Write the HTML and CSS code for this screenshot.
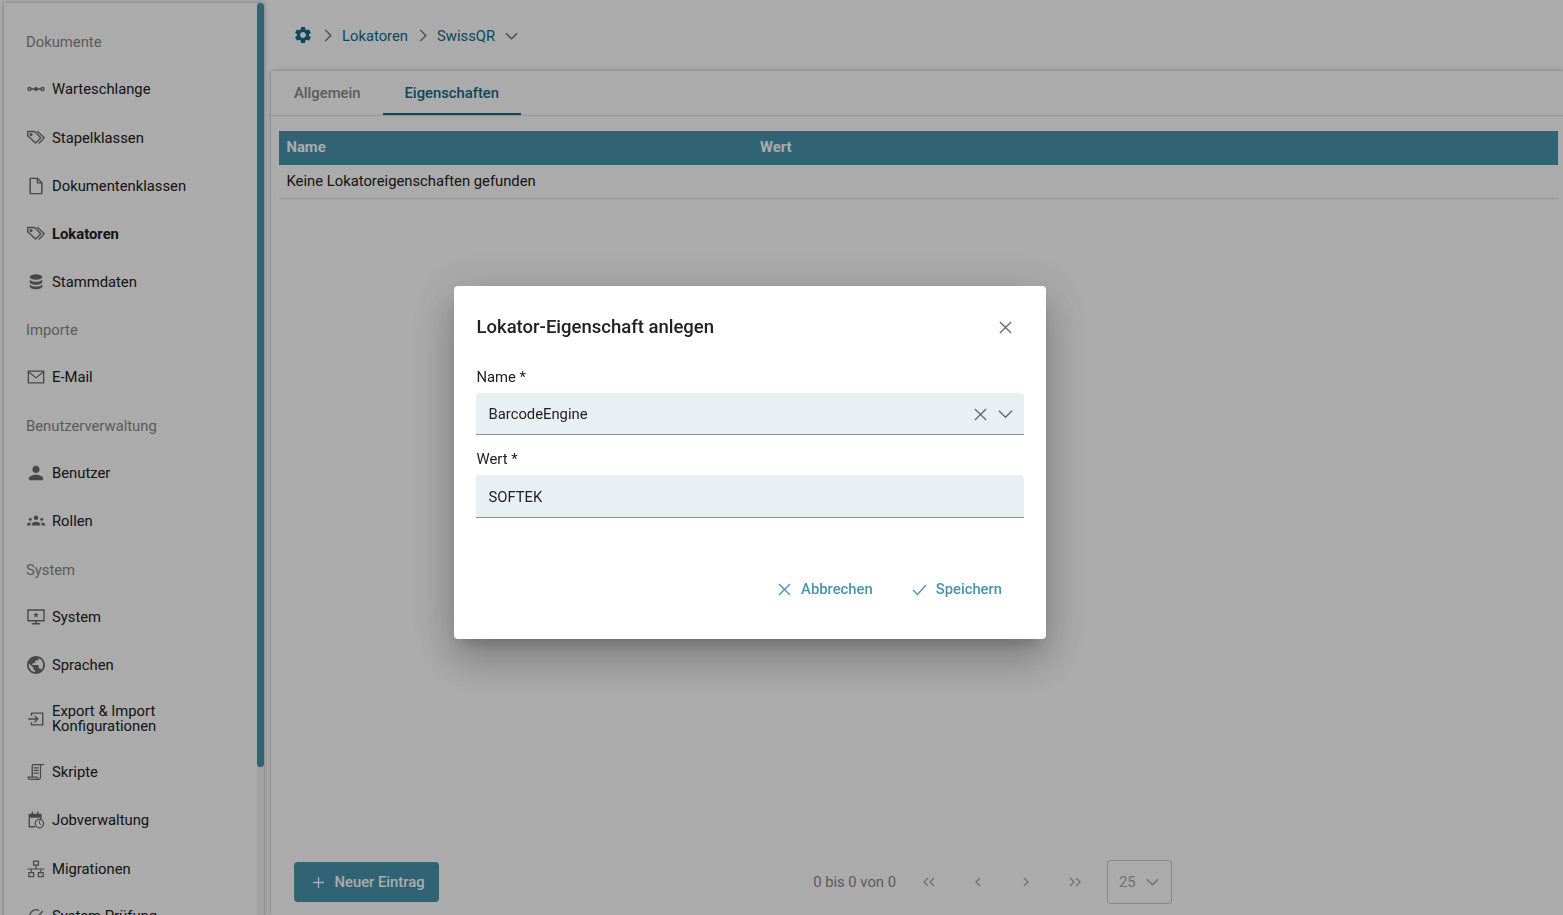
FILE: index.html
```html
<!DOCTYPE html>
<html lang="de">
<head>
<meta charset="utf-8">
<title>Lokatoren</title>
<link rel="stylesheet" href="styles.css">
</head>
<body>
<div class="app">
  <aside class="sidebar">
    <nav class="nav">
      <div class="group">Dokumente</div>
      <a class="item"><svg class="ico" viewBox="0 0 20 20"><circle cx="2.800" cy="10" r="1.700"/><circle cx="10" cy="10" r="2.200" class="fill"/><circle cx="17.200" cy="10" r="1.700"/><path d="M4.500 10h3.500M12 10h3.500"/></svg><span>Warteschlange</span></a>
      <a class="item item-low"><svg class="ico" viewBox="0 0 20 20"><path d="M.8 2.800h7.500l7 7-5.700 5.700-8.800-8z"/><circle cx="4.500" cy="6.200" r="1.100"/><path d="M11.800 2.800l7.400 7-5.700 5.700"/></svg><span>Stapelklassen</span></a>
      <a class="item item-low"><svg class="ico" viewBox="0 0 20 20"><path d="M3.500 1.500h8l5 5v12h-13z" stroke-width="1.600"/><path d="M11.500 1.500v5h5" stroke-width="1.400"/></svg><span>Dokumentenklassen</span></a>
      <a class="item item-low active"><svg class="ico" viewBox="0 0 20 20"><path d="M.8 2.800h7.500l7 7-5.700 5.700-8.800-8z"/><circle cx="4.500" cy="6.200" r="1.100"/><path d="M11.800 2.800l7.400 7-5.700 5.700"/></svg><span>Lokatoren</span></a>
      <a class="item item-low"><svg class="ico" viewBox="0 0 20 20"><ellipse cx="10" cy="4.500" rx="7" ry="3" class="fill"/><path class="fill" d="M3 7.100c1 1.700 3.800 2.600 7 2.600s6-.9 7-2.600v2.900c0 1.700-3.100 3-7 3s-7-1.300-7-3z"/><path class="fill" d="M3 12.500c1 1.700 3.800 2.600 7 2.600s6-.9 7-2.600v2.500c0 1.800-3.100 3.100-7 3.100s-7-1.300-7-3.100z"/></svg><span>Stammdaten</span></a>
      <div class="group">Importe</div>
      <a class="item"><svg class="ico" viewBox="0 0 20 20"><rect x="1.500" y="3.500" width="17" height="13" stroke-width="1.500"/><path d="M2 4.500l8 6.500 8-6.500" stroke-width="1.300"/></svg><span>E-Mail</span></a>
      <div class="group">Benutzerverwaltung</div>
      <a class="item"><svg class="ico" viewBox="2 2 20 20"><path class="fill" d="M12 12c2.210 0 4-1.790 4-4s-1.790-4-4-4-4 1.790-4 4 1.790 4 4 4zm0 2c-2.670 0-8 1.340-8 4v2h16v-2c0-2.660-5.330-4-8-4z"/></svg><span>Benutzer</span></a>
      <a class="item"><svg class="ico" viewBox="0 0 20 20"><circle cx="10" cy="6.500" r="2.500" class="fill"/><circle cx="3.600" cy="8" r="1.700" class="fill"/><circle cx="16.400" cy="8" r="1.700" class="fill"/><path class="fill" d="M5.400 15v-1.300c0-1.800 2.100-2.900 4.600-2.900s4.600 1.100 4.600 2.900V15z"/><path class="fill" d="M0 15v-1.100c0-1.200 1.400-2.200 3.600-2.200.4 0 .7 0 .9.100-.5.600-.7 1.200-.7 1.900V15zM20 15v-1.100c0-1.200-1.400-2.200-3.600-2.200-.4 0-.7 0-.9.100.5.600.7 1.200.7 1.900V15z"/></svg><span>Rollen</span></a>
      <div class="group">System</div>
      <a class="item"><svg class="ico" viewBox="0 0 20 20"><rect x="1" y="2.200" width="18" height="12" stroke-width="1.500"/><path class="fill" d="M10 4.800l.9 2 2.100.2-1.600 1.400.5 2.100-1.900-1.100-1.900 1.100.5-2.100L7 7l2.100-.2z"/><path d="M10 14.500v2.800M6 17.600h8" stroke-width="1.700"/></svg><span>System</span></a>
      <a class="item"><svg class="ico" viewBox="2 2 20 20"><path class="fill" d="M12 2C6.480 2 2 6.480 2 12s4.480 10 10 10 10-4.480 10-10S17.520 2 12 2zm-1 17.930c-3.950-.49-7-3.850-7-7.930 0-.62.08-1.210.21-1.790L9 15v1c0 1.100.9 2 2 2v1.930zm6.900-2.540c-.26-.81-1-1.390-1.900-1.390h-1v-3c0-.55-.45-1-1-1H8v-2h2c.55 0 1-.45 1-1V7h2c1.100 0 2-.9 2-2v-.41c2.930 1.190 5 4.060 5 7.410 0 2.080-.8 3.970-2.100 5.390z"/></svg><span>Sprachen</span></a>
      <a class="item item-tall"><svg class="ico" viewBox="0 0 20 20"><path d="M5 6V3.500h12.500v13H5v-2.500" stroke-width="1.500"/><path d="M2 10h10M8.800 6.800l3.300 3.200-3.300 3.200" stroke-width="1.500"/></svg><span>Export &amp; Import<br>Konfigurationen</span></a>
      <a class="item"><svg class="ico" viewBox="0 0 20 20"><path d="M5.800 15V3.300a1.500 1.500 0 0 1 1.500-1.500h11" stroke-width="1.500"/><path d="M15 1.800v14a2.400 2.400 0 0 1-2.400 2.400H3.600c-1.500 0-2.400-1-2.400-2.400h10c0 1.500.7 2.400 1.600 2.400" stroke-width="1.400"/><path d="M8 5.300h4.500M8 8.300h4.500M8 11.300h4.500" stroke-width="1.400"/></svg><span>Skripte</span></a>
      <a class="item"><svg class="ico" viewBox="0 0 20 20"><path d="M8.500 17.500H2.500V3.800h13v4.700" stroke-width="1.500"/><path class="fill" d="M2.500 3.800h13v3.700h-13z"/><path d="M6 1.500v3M12 1.500v3" stroke-width="1.700"/><circle cx="13.800" cy="14" r="4.700" stroke-width="1.400"/><path d="M13.800 11.500V14l1.800 1.100" stroke-width="1.100"/></svg><span>Jobverwaltung</span></a>
      <a class="item item-low"><svg class="ico" viewBox="0 0 20 20"><rect x="7.300" y="1.200" width="5.400" height="4.600" stroke-width="1.400"/><rect x="2" y="14" width="5.400" height="4.600" stroke-width="1.400"/><rect x="12.600" y="14" width="5.400" height="4.600" stroke-width="1.400"/><path d="M10 5.800v4.200M4.700 14v-4h10.600v4M1 10h18" stroke-width="1.300"/></svg><span>Migrationen</span></a>
      <a class="item"><svg class="ico" viewBox="0 0 20 20"><path d="M17 10a7 7 0 1 1-4-6.300" stroke-width="1.500"/><path d="M7 10l3 3 7-8" stroke-width="1.500"/></svg><span>System Prüfung</span></a>
    </nav>
    <div class="scrollbar"><div class="thumb"></div></div>
  </aside>
  <main class="main">
    <header class="crumbs">
      <svg class="gear" viewBox="0 0 24 24"><path d="M19.140 12.940c.04-.3.06-.61.06-.94 0-.32-.02-.64-.07-.94l2.030-1.580c.18-.14.23-.41.12-.61l-1.920-3.320c-.12-.22-.37-.29-.59-.22l-2.390.96c-.5-.38-1.030-.7-1.620-.94l-.36-2.540c-.04-.24-.24-.41-.48-.41h-3.840c-.24 0-.43.17-.47.41l-.36 2.540c-.59.24-1.130.57-1.620.94l-2.390-.96c-.22-.08-.47 0-.59.22L2.740 8.870c-.12.21-.08.47.12.61l2.030 1.580c-.05.3-.09.63-.09.94s.02.64.07.94l-2.030 1.580c-.18.14-.23.41-.12.61l1.920 3.320c.12.22.37.29.59.22l2.390-.96c.5.38 1.030.7 1.620.94l.36 2.540c.05.24.24.41.48.41h3.840c.24 0 .44-.17.47-.41l.36-2.540c.59-.24 1.130-.56 1.620-.94l2.390.96c.22.08.47 0 .59-.22l1.920-3.320c.12-.22.07-.47-.12-.61l-2.010-1.580zM12 15.600c-1.980 0-3.600-1.620-3.600-3.600s1.620-3.600 3.600-3.600 3.600 1.620 3.600 3.600-1.620 3.600-3.600 3.600z"/></svg>
      <svg class="crumb-sep" viewBox="0 0 10 16"><path d="M2 2l6 6-6 6"/></svg>
      <a class="crumb">Lokatoren</a>
      <svg class="crumb-sep" viewBox="0 0 10 16"><path d="M2 2l6 6-6 6"/></svg>
      <a class="crumb">SwissQR</a>
      <svg class="crumb-down" viewBox="0 0 16 10"><path d="M2 2l6 6 6-6"/></svg>
    </header>
    <section class="panel">
      <div class="tabs">
        <div class="tab">Allgemein</div>
        <div class="tab tab-active">Eigenschaften</div>
      </div>
      <div class="table">
        <div class="thead"><div class="col-name">Name</div><div>Wert</div></div>
        <div class="trow">Keine Lokatoreigenschaften gefunden</div>
      </div>
      <footer class="foot">
        <button class="add"><svg class="plus" viewBox="0 0 14 14"><path d="M7 1v12M1 7h12"/></svg>Neuer Eintrag</button>
        <div class="pager">
          <span class="range">0 bis 0 von 0</span>
          <svg class="pg" viewBox="0 0 14 12"><path d="M6 2L2 6l4 4M12 2L8 6l4 4"/></svg>
          <svg class="pg" viewBox="0 0 14 12"><path d="M9 2L5 6l4 4"/></svg>
          <svg class="pg" viewBox="0 0 14 12"><path d="M5 2l4 4-4 4"/></svg>
          <svg class="pg" viewBox="0 0 14 12"><path d="M2 2l4 4-4 4M8 2l4 4-4 4"/></svg>
          <div class="size"><span>25</span><svg class="size-down" viewBox="0 0 16 10"><path d="M2 2l6 6 6-6"/></svg></div>
        </div>
      </footer>
    </section>
  </main>
</div>
<div class="overlay">
  <div class="dialog">
    <div class="dialog-head">
      <h2>Lokator-Eigenschaft anlegen</h2>
      <svg class="x-close" viewBox="0 0 14 14"><path d="M1 1l12 12M13 1L1 13"/></svg>
    </div>
    <label class="label">Name *</label>
    <div class="field">
      <span class="value">BarcodeEngine</span>
      <svg class="x-close" viewBox="0 0 14 14"><path d="M1 1l12 12M13 1L1 13"/></svg>
      <svg class="down" viewBox="0 0 16 10"><path d="M1 1.500l7 7 7-7"/></svg>
    </div>
    <label class="label label-next">Wert *</label>
    <div class="field field-second"><span class="value">SOFTEK</span></div>
    <div class="actions">
      <a class="action"><svg class="act-ico" viewBox="0 0 14 14"><path d="M1 1l12 12M13 1L1 13"/></svg>Abbrechen</a>
      <a class="action"><svg class="act-ico act-check" viewBox="0 0 15 13"><path d="M1 7l4.500 4.500L14 2"/></svg>Speichern</a>
    </div>
  </div>
</div>
</body>
</html>
```

FILE: styles.css
```css
* { box-sizing: border-box; }
html, body { margin: 0; height: 100%; overflow: hidden; }
body { font-family: Roboto, "Liberation Sans", sans-serif; font-size: 14.8px; color: #212121; background: #fff; }
svg { display: block; fill: none; flex: none; }

.app { display: flex; height: 915px; overflow: hidden; }

.sidebar { display: flex; width: 260px; flex: none; margin: 3px 0 0 4px; height: 1000px; background: #fff; box-shadow: 0 0 4px rgba(0,0,0,.35); }
.nav { flex: 1; padding-top: 14px; }
.group { height: 48px; padding: 1px 0 0 22px; display: flex; align-items: center; color: #888; }
.item { height: 48px; padding-left: 23px; display: flex; align-items: center; line-height: 15px; color: #212121; }
.item-low { padding-top: 2px; }
.item-tall { height: 59px; }
.item.active { font-weight: 700; }
.ico { width: 18px; height: 18px; margin-right: 7px; stroke: #6c6c6c; stroke-width: 1.500; stroke-linejoin: round; stroke-linecap: round; }
.ico .fill { fill: #6c6c6c; stroke: none; }
.scrollbar { width: 7px; background: #f2f2f2; }
.thumb { height: 764px; background: #4894ac; border-radius: 4px; }

.main { flex: 1; min-width: 0; display: flex; flex-direction: column; margin-left: 7px; }
.crumbs { height: 71px; padding-left: 24px; display: flex; align-items: center; color: #0e6c8c; flex: none; }
.gear { width: 20px; height: 20px; margin: -2px 1px 0 -2px; fill: #0e6c8c; }
.crumb-sep { width: 10px; height: 15px; margin: 0 9px 0 9px; stroke: #707070; stroke-width: 1.500; }
.crumb { color: #0e6c8c; }
.crumb + .crumb-sep { margin-left: 10px; }
.crumb-down { width: 15px; height: 10px; margin-left: 9px; stroke: #707070; stroke-width: 1.500; }

.panel { flex: 1; display: flex; flex-direction: column; background: #fff; box-shadow: 0 0 4px rgba(0,0,0,.3); min-height: 0; }
.tabs { height: 45px; display: flex; border-bottom: 1px solid #ddd; padding-left: 1px; flex: none; }
.tab { padding: 0 22px; height: 44px; line-height: 44px; font-weight: 500; color: #888; }
.tab-active { color: #0e6c8c; border-bottom: 2px solid #0e6c8c; }
.table { margin: 15px 5px 0 8px; }
.thead { height: 34px; display: flex; align-items: center; background: #4894ac; color: #fff; font-weight: 700; padding: 0 0 3px 7.5px; }
.col-name { width: 473.5px; }
.trow { height: 34px; display: flex; align-items: center; padding: 0 0 2px 7.5px; border-bottom: 1px solid #ddd; }
.foot { margin-top: auto; height: 56px; flex: none; display: flex; padding: 4px 0 0 23px; justify-content: space-between; }
.add { width: 145px; height: 40px; border: 0; border-radius: 4px; background: #4894ac; color: #fff; font: 500 14.8px Roboto, sans-serif; display: flex; align-items: center; padding-left: 18px; margin-top: -1px; }
.plus { width: 13px; height: 13px; margin-right: 9.500px; stroke: #fff; stroke-width: 1.500; }
.pager { display: flex; align-items: center; height: 44px; margin-top: -3px; padding-right: 391px; }
.range { color: #888; margin-right: 26px; white-space: nowrap; }
.pg { width: 14px; height: 12px; margin-right: 35px; stroke: #aaa; stroke-width: 1.400; }
.pg:nth-of-type(2) { margin-right: 34px; }
.pg:nth-of-type(4) { margin-right: 25px; }
.size { width: 65px; height: 44px; border: 1px solid #ccc; border-radius: 3px; display: flex; align-items: center; padding-left: 11px; color: #aaa; }
.size-down { width: 15px; height: 10px; margin-left: 9px; stroke: #aaa; stroke-width: 1.500; }

.overlay { position: fixed; inset: 0; background: rgba(0,0,0,.33); }
.dialog { position: absolute; left: 454px; top: 286px; width: 592px; height: 353px; background: #fff; border-radius: 4px; padding: 0 22px; box-shadow: 0 11px 15px -7px rgba(0,0,0,.2), 0 24px 38px 3px rgba(0,0,0,.14), 0 9px 46px 8px rgba(0,0,0,.12); }
.dialog-head { height: 64px; padding: 18px 12px 0 0.500px; display: flex; align-items: center; justify-content: space-between; }
.dialog-head h2 { margin: 0; font-size: 18.500px; font-weight: 500; color: #212121; }
.x-close { width: 13px; height: 13px; stroke: #666; stroke-width: 1.400; }
.label { display: block; height: 43px; padding: 17px 0 0 0.500px; line-height: 20px; }
.label-next { height: 40px; padding-top: 14px; }
.field { height: 42px; display: flex; align-items: center; background: #e9f0f4; border-bottom: 1px solid #8a8f93; border-radius: 4px 4px 0 0; padding: 1px 12px 0 12.500px; }
.field-second { height: 43px; padding-top: 2px; }
.value { flex: 1; }
.field .x-close { margin-right: 11px; }
.down { width: 15px; height: 10px; margin-right: -1px; stroke: #666; stroke-width: 1.400; }
.actions { display: flex; justify-content: flex-end; padding: 61px 22px 0 0; gap: 39px; }
.action { display: flex; align-items: center; height: 20px; color: #4894ac; font-weight: 500; }
.act-ico { width: 13px; height: 13px; margin-right: 10px; stroke: #4894ac; stroke-width: 1.400; }
.act-check { width: 15px; margin-right: 9px; }
```
